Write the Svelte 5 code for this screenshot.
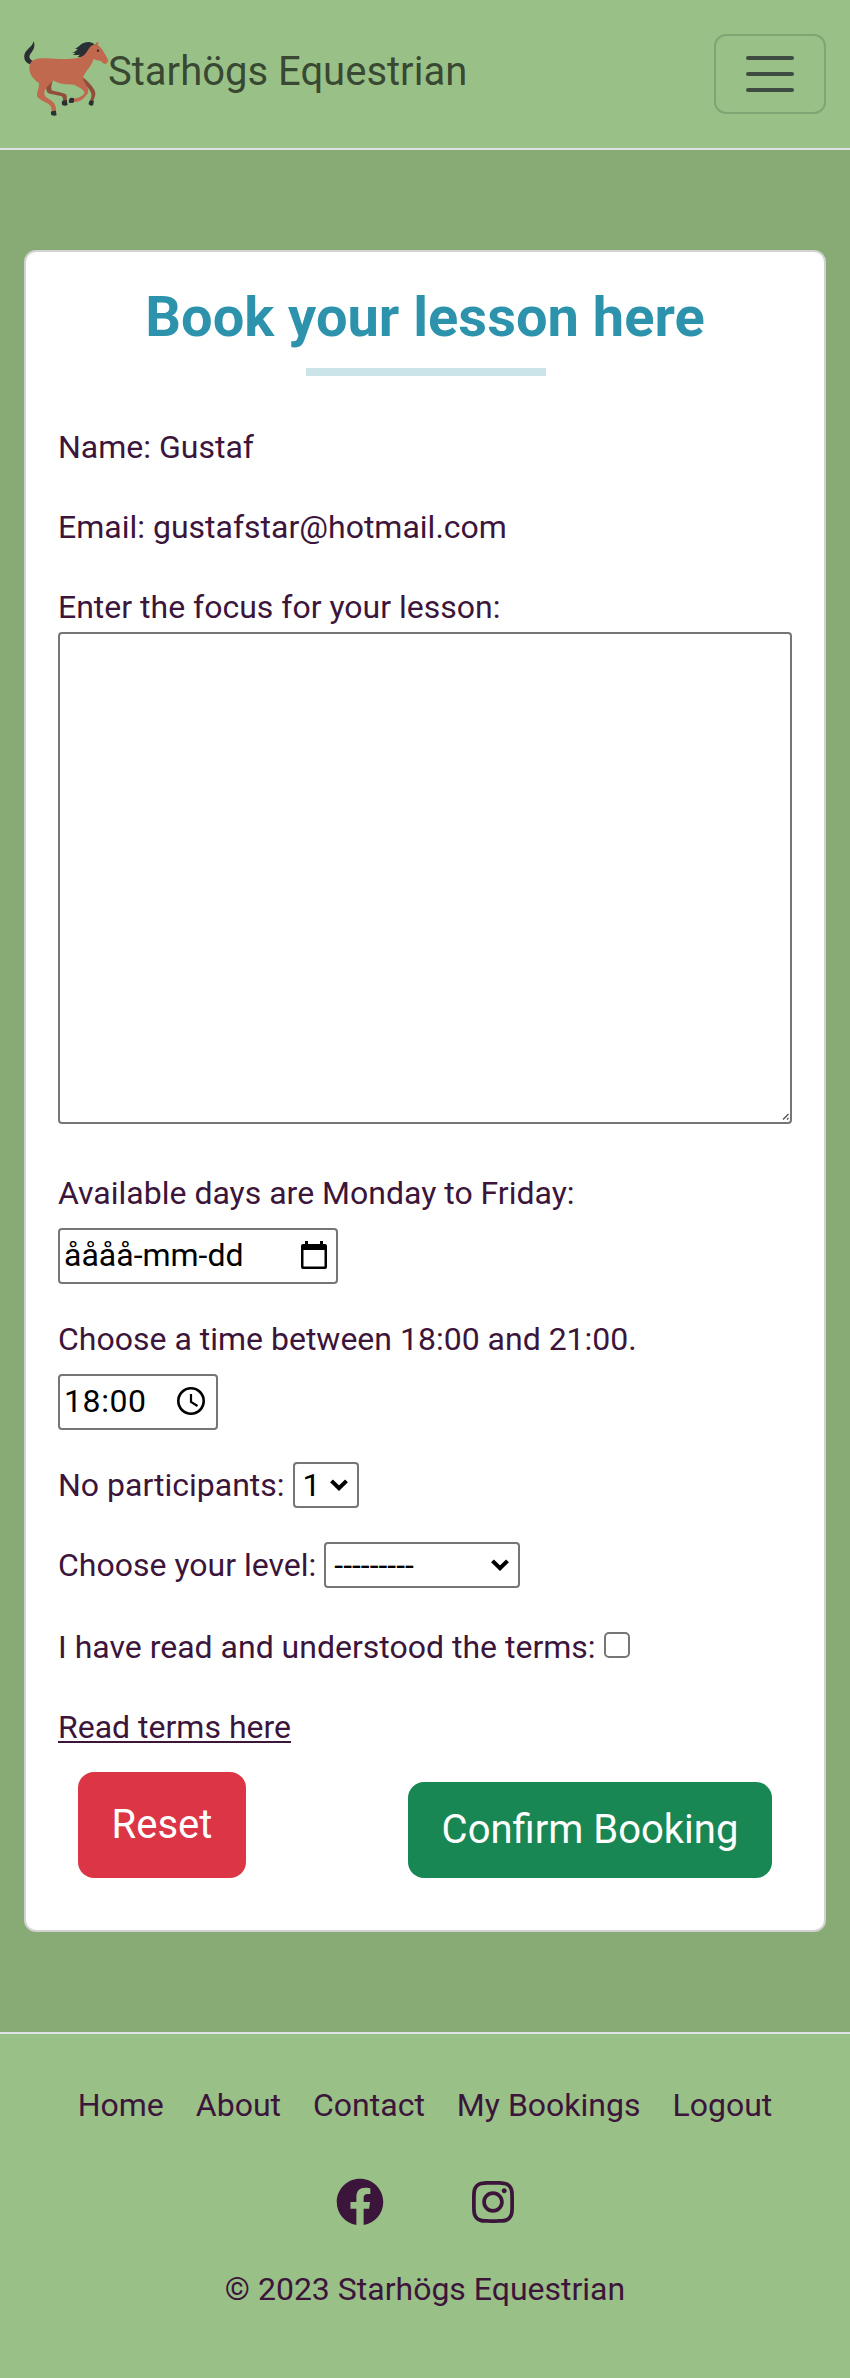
<script>
  const details = [
    { label: 'Name', value: 'Gustaf' },
    { label: 'Email', value: 'gustafstar@hotmail.com' }
  ];
  const links = ['Home', 'About', 'Contact', 'My Bookings', 'Logout'];
  let focus = $state('');
</script>

{#snippet chevron()}
  <svg class="chevron" viewBox="0 0 18 12" width="18" height="12" aria-hidden="true">
    <path d="M1.5 1.8 9 9.2l7.500-7.400" fill="none" stroke="#000" stroke-width="4" />
  </svg>
{/snippet}

<header>
  <a class="brand" href="#home">
    <svg class="horse" viewBox="42 30 252 228" width="84" height="76" aria-hidden="true">
      <path fill="#8f4f3b" d="M128 150c-1 12-6 17-3 31 12 5 31 5 43 12 4 6 2 15 3 21l-12 2c0-7 1-13-4-17-12-4-30-5-42-10-6-9-6-19-3-32zM218 142c16 12 34 30 38 46 1 9-4 18-7 27l-9-2c3-9 6-18 3-25-5-13-18-22-27-34z" />
      <path fill="#292f33" d="M71 34c5 12 1 23-7 34-8 10-9 17 4 25l-6 10c-14-3-21-14-19-27 2-17 24-24 28-42zM254 44c-7-9-21-10-33-5-11 4-15 14-27 17l9 1c-4 5-8 9-17 10l10 2c-3 3-5 4-8 5 10 1 15 1 21 0-2 3-3 5-7 7 16 2 23-4 30-12 7-10 12-17 22-25z" />
      <path fill="#c1694f" d="M94 85c38-2 60 6 105 0 23-3 29-16 39-31 4-6 10-9 18-11 2-5 5-7 11-7-3 4-5 7-1 11 12 9 18 24 27 40 3 8-1 14-8 15-7-1-9-8-14-9-7-3-14-2-20-7-6 22-23 36-30 51-4 9 1 18 6 26 5 9 12 19 5 29-9 13-21 23-36 24-4 0-8-1-12-2l2-9c15 2 33-7 38-17-5-13-19-16-31-24-23-1-42 1-64-13-8 12-23 20-26 37 0 6 3 13 8 15 12 8 29 15 27 40l-13 1c0-8-1-15-6-19-12-9-30-14-38-26-1-13 7-25 6-40C70 149 58 132 58 114c-1-17 13-29 36-29z" />
      <path fill="#292f33" d="M178 207c4-5 11-4 15-1l-2 12-13 1c-2-3-2-8 0-12zM156 213l14-3c1 5 2 10 3 14-4 4-9 4-16 2-2-4-2-8-1-13zM241 211l11 2c-2 5-1 9-3 13-5 3-9 1-13-3 0-5 1-9 5-12zM124 244l14-2c0 5 1 10 2 14-5 2-10 2-15 0-3-4-3-8-1-12z" />
      <circle cx="264" cy="62" r="3.500" fill="#292f33" />
    </svg>
    <span>Starhögs Equestrian</span>
  </a>
  <button class="toggler" aria-label="Toggle navigation">
    <svg viewBox="0 0 30 30" width="60" height="60">
      <path d="M4 7h22M4 15h22M4 23h22" stroke="rgba(33,37,41,.75)" stroke-linecap="round" stroke-width="2" />
    </svg>
  </button>
</header>

<main>
  <section class="card">
    <h1>Book your lesson here</h1>
    <div class="rule"></div>

    {#each details as d}
      <p>{d.label}: {d.value}</p>
    {/each}

    <label class="line" for="focus">Enter the focus for your lesson:</label>
    <div class="area">
      <textarea id="focus" bind:value={focus}></textarea>
      <svg class="grip" viewBox="0 0 8 8" width="8" height="8" aria-hidden="true">
        <path d="M1 6.500 6.500 1M5 6.500 6.500 5" stroke="#555" stroke-width="1.400" />
      </svg>
    </div>

    <div class="line">Available days are Monday to Friday:</div>
    <div class="picker date">
      <span>åååå-mm-dd</span>
      <svg viewBox="0 0 26 28" width="26" height="28" aria-hidden="true">
        <path fill="#000" fill-rule="evenodd" d="M4 0h3v3h12V0h3v3h2q2 0 2 2v21q0 2-2 2H2q-2 0-2-2V5q0-2 2-2h2zM2.500 9v16.500h21V9z" />
      </svg>
    </div>

    <div class="line">Choose a time between 18:00 and 21:00.</div>
    <div class="picker time">
      <span>18:00</span>
      <svg viewBox="0 0 28 28" width="28" height="28" aria-hidden="true">
        <circle cx="14" cy="14" r="12.700" fill="none" stroke="#000" stroke-width="2.600" />
        <path d="M14 7v8l6.500 4" fill="none" stroke="#000" stroke-width="2.200" />
      </svg>
    </div>

    <div class="row">
      <span>No participants:</span>
      <div class="select count"><span>1</span>{@render chevron()}</div>
    </div>
    <div class="row">
      <span>Choose your level:</span>
      <div class="select level"><span>---------</span>{@render chevron()}</div>
    </div>
    <label class="row consent">
      <span>I have read and understood the terms:</span>
      <input type="checkbox" />
    </label>
    <a class="terms" href="#terms">Read terms here</a>

    <div class="actions">
      <button class="reset">Reset</button>
      <button class="confirm">Confirm Booking</button>
    </div>
  </section>
</main>

<footer>
  <nav>
    {#each links as link}
      <a href="#{link}">{link}</a>
    {/each}
  </nav>
  <div class="social">
    <svg viewBox="0 0 512 512" width="48" height="48" role="img" aria-label="Facebook">
      <path fill="currentColor" d="M504 256C504 119 393 8 256 8S8 119 8 256c0 123.780 90.690 226.380 209.250 245V327.690h-63V256h63v-54.640c0-62.150 37-96.480 93.670-96.480 27.140 0 55.520 4.840 55.520 4.840v61h-31.280c-30.800 0-40.410 19.120-40.410 38.730V256h68.780l-11 71.690h-57.780V501C413.310 482.380 504 379.780 504 256z" />
    </svg>
    <svg viewBox="0 0 448 512" width="42" height="48" role="img" aria-label="Instagram">
      <path fill="currentColor" d="M224.100 141c-63.600 0-114.900 51.300-114.900 114.900s51.300 114.900 114.900 114.900S339 319.500 339 255.900 287.700 141 224.100 141zm0 189.600c-41.100 0-74.700-33.500-74.700-74.700s33.500-74.700 74.700-74.700 74.700 33.500 74.700 74.700-33.600 74.700-74.700 74.700zm146.400-194.300c0 14.900-12 26.800-26.800 26.800-14.900 0-26.800-12-26.800-26.800s12-26.800 26.800-26.800 26.800 12 26.800 26.800zm76.100 27.200c-1.700-35.900-9.900-67.700-36.200-93.900-26.200-26.200-58-34.400-93.900-36.200-37-2.100-147.900-2.100-184.900 0-35.800 1.700-67.600 9.900-93.900 36.100s-34.400 58-36.200 93.900c-2.100 37-2.100 147.900 0 184.900 1.700 35.900 9.900 67.700 36.200 93.900s58 34.400 93.900 36.200c37 2.100 147.900 2.100 184.900 0 35.900-1.700 67.700-9.900 93.900-36.200 26.200-26.200 34.400-58 36.200-93.900 2.100-37 2.100-147.800 0-184.800zM398.800 388c-7.800 19.600-22.900 34.700-42.600 42.600-29.500 11.700-99.500 9-132.100 9s-102.700 2.600-132.100-9c-19.600-7.800-34.700-22.900-42.600-42.600-11.700-29.500-9-99.500-9-132.100s-2.600-102.700 9-132.100c7.800-19.600 22.900-34.700 42.600-42.600 29.500-11.700 99.500-9 132.100-9s102.700-2.600 132.100 9c19.600 7.800 34.700 22.900 42.600 42.600 11.700 29.500 9 99.500 9 132.100s2.700 102.700-9 132.100z" />
    </svg>
  </div>
  <div>© 2023 Starhögs Equestrian</div>
</footer>

<style>
  :global(body) {
    background: #99c086;
    color: #3c153b;
    font: 32px/48px Roboto, sans-serif;
  }
  :global(*) { box-sizing: border-box; }
  a { color: inherit; }
  button { font: inherit; cursor: pointer; }
  svg { display: block; flex: none; }

  header {
    display: flex;
    justify-content: space-between;
    align-items: center;
    height: 150px;
    padding: 0 24px;
    border-bottom: 2px solid #dee2e6;
  }
  .brand {
    display: flex;
    align-items: flex-start;
    height: 68px;
    color: rgba(0, 0, 0, .65);
    font-size: 40px;
    line-height: 60px;
    text-decoration: none;
  }
  .brand span { margin-top: 2px; }
  .toggler {
    width: 112px;
    height: 80px;
    padding: 8px 24px;
    border: 2px solid rgba(0, 0, 0, .15);
    border-radius: 12px;
    background: none;
  }

  main {
    height: 1882px;
    padding: 100px 24px;
    background: #88ab75;
  }
  .card {
    display: flex;
    flex-direction: column;
    height: 1682px;
    padding: 32px;
    border: 2px solid #d2d2d2;
    border-radius: 12px;
    background: #fff;
  }
  h1 {
    margin: 0;
    color: #2d93ad;
    font-size: 56px;
    font-weight: 700;
    line-height: 67px;
    text-align: center;
  }
  .rule {
    width: 240px;
    height: 8px;
    margin: 17px 0 47px 248px;
    background: #cbe4ea;
  }
  p { margin: 0 0 32px; }
  .area {
    position: relative;
    height: 492px;
    margin: 1px 0 45px;
  }
  textarea {
    display: block;
    width: 100%;
    height: 100%;
    padding: 4px;
    border: 2px solid #767676;
    border-radius: 4px;
    font: inherit;
    resize: none;
  }
  .grip {
    position: absolute;
    right: 2px;
    bottom: 3px;
  }
  .picker {
    display: flex;
    align-items: center;
    justify-content: space-between;
    height: 56px;
    margin: 11px 0 31px;
    border: 2px solid #767676;
    border-radius: 4px;
    color: #000;
  }
  .date { width: 280px; padding: 0 9px 2px 4px; }
  .time { width: 160px; padding: 0 11px 2px 4px; letter-spacing: .6px; }

  .row {
    display: flex;
    align-items: center;
    height: 48px;
    margin-bottom: 32px;
  }
  .consent { margin-top: 2px; }
  .select {
    display: flex;
    align-items: center;
    justify-content: space-between;
    height: 46px;
    margin: 0 0 0 8px;
    padding: 0 9px 0 8px;
    border: 2px solid #767676;
    border-radius: 4px;
    color: #000;
  }
  .count { width: 66px; }
  .level { width: 196px; }
  input {
    appearance: none;
    width: 26px;
    height: 26px;
    margin: 0 0 4px 8px;
    border: 2px solid #767676;
    border-radius: 5px;
    background: #fff;
  }
  .terms {
    align-self: flex-start;
    text-underline-offset: 3px;
    text-decoration-thickness: 2px;
  }
  .actions {
    display: flex;
    justify-content: space-between;
    align-items: flex-end;
    margin: 21px 20px 0;
  }
  .actions button {
    padding: 0;
    border: 0;
    border-radius: 16px;
    color: #fff;
    font-size: 40px;
    line-height: 60px;
  }
  .reset { width: 168px; height: 106px; background: #dc3545; }
  .confirm { width: 364px; height: 96px; background: #198754; }

  footer {
    display: flex;
    flex-direction: column;
    align-items: center;
    height: 344px;
    padding-top: 47px;
    border-top: 2px solid #dee2e6;
  }
  nav { display: flex; gap: 32px; }
  nav a { text-decoration: none; }
  .social {
    display: flex;
    gap: 88px;
    margin: 49px 0 39px;
  }
</style>
